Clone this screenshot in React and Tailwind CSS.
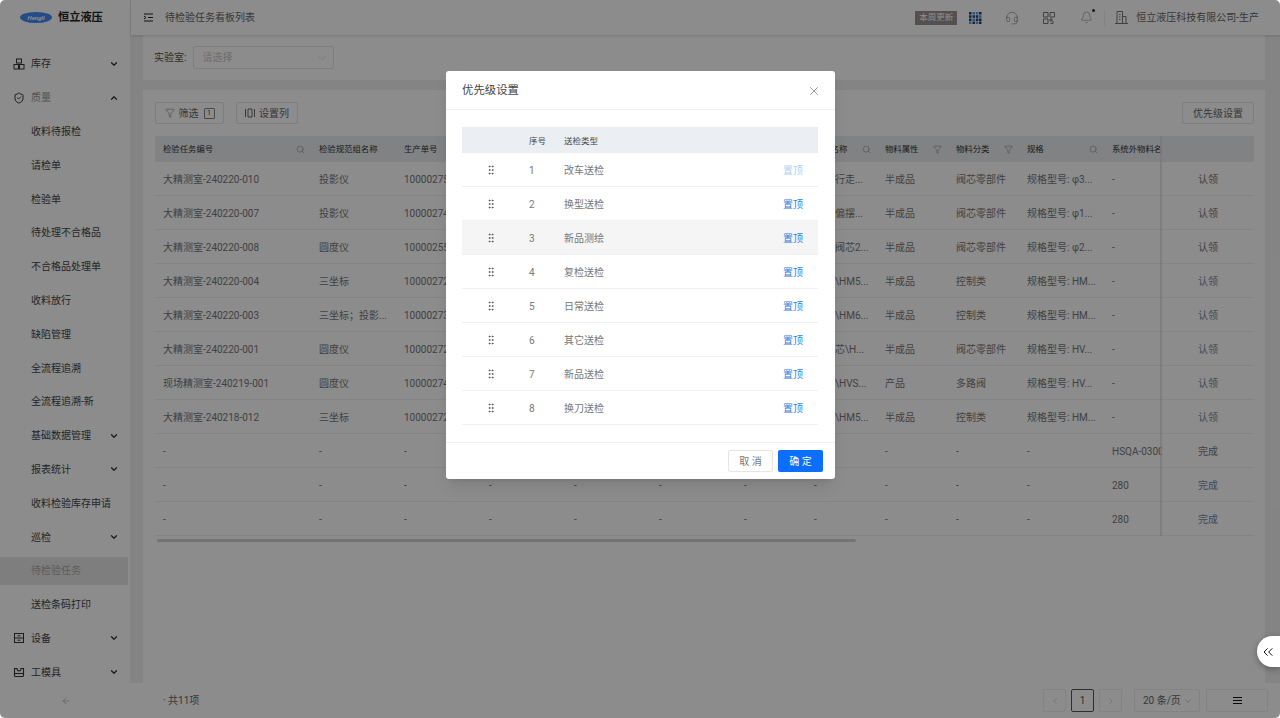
import React from "react";
import {
  Bell,
  ChevronDown,
  ChevronLeft,
  ChevronRight,
  ChevronUp,
  ChevronsLeft,
  Filter,
  GripVertical,
  Headset,
  Search,
  ShieldCheck,
  X,
  ArrowLeft,
} from "lucide-react";

const FONT = "font-['Roboto','Noto_Sans_CJK_SC',sans-serif]";
const COLS =
  "grid grid-cols-[156px_85px_85px_85px_85px_85px_70px_71px_71px_71px_85px_58px_92px]";

const BoxesIcon = () => (
  <svg width="12" height="12" viewBox="0 0 12 12" fill="none" stroke="currentColor" strokeWidth="1">
    <rect x="3.5" y="1" width="5" height="4" />
    <rect x="1" y="6.5" width="4.5" height="4.5" />
    <rect x="6.5" y="6.5" width="4.5" height="4.5" />
  </svg>
);

const DeviceIcon = () => (
  <svg width="12" height="12" viewBox="0 0 12 12" fill="none" stroke="currentColor" strokeWidth="1">
    <rect x="1.5" y="1.5" width="9" height="9" />
    <path d="M1.5 6h9M4.5 3.8h3M4.5 8.2h3" />
  </svg>
);

const ToolIcon = () => (
  <svg width="12" height="12" viewBox="0 0 12 12" fill="none" stroke="currentColor" strokeWidth="1.1">
    <path d="M1.5 2v7.5a1 1 0 0 0 1 1h7a1 1 0 0 0 1-1V2" />
    <path d="M1.5 2.5h2.5a2 2.5 0 0 0 4 0h2.5" />
    <path d="M1.5 7.5h9" />
  </svg>
);

const menu = [
  { label: "库存", icon: <BoxesIcon />, arrow: "down" },
  { label: "质量", icon: <ShieldCheck size={12} />, arrow: "up", muted: true },
  { label: "收料待报检" },
  { label: "请检单" },
  { label: "检验单" },
  { label: "待处理不合格品" },
  { label: "不合格品处理单" },
  { label: "收料放行" },
  { label: "缺陷管理" },
  { label: "全流程追溯" },
  { label: "全流程追溯-新" },
  { label: "基础数据管理", arrow: "down" },
  { label: "报表统计", arrow: "down" },
  { label: "收料检验库存申请" },
  { label: "巡检", arrow: "down" },
  { label: "待检验任务", active: true },
  { label: "送检条码打印" },
  { label: "设备", icon: <DeviceIcon />, arrow: "down" },
  { label: "工模具", icon: <ToolIcon />, arrow: "down" },
];

const rows = [
  ["大精测室-240220-010", "投影仪", "10000275", "行走...", "半成品", "阀芯零部件", "规格型号: φ3...", "-", "认领"],
  ["大精测室-240220-007", "投影仪", "10000274", "偏摆...", "半成品", "阀芯零部件", "规格型号: φ1...", "-", "认领"],
  ["大精测室-240220-008", "圆度仪", "10000255", "阀芯2...", "半成品", "阀芯零部件", "规格型号: φ2...", "-", "认领"],
  ["大精测室-240220-004", "三坐标", "10000272", "\\HM5...", "半成品", "控制类", "规格型号: HM...", "-", "认领"],
  ["大精测室-240220-003", "三坐标；投影...", "10000273", "\\HM6...", "半成品", "控制类", "规格型号: HM...", "-", "认领"],
  ["大精测室-240220-001", "圆度仪", "10000272", "芯\\H...", "半成品", "阀芯零部件", "规格型号: HV...", "-", "认领"],
  ["现场精测室-240219-001", "圆度仪", "10000274", "\\HVS...", "产品", "多路阀", "规格型号: HV...", "-", "认领"],
  ["大精测室-240218-012", "三坐标", "10000272", "\\HM5...", "半成品", "控制类", "规格型号: HM...", "-", "认领"],
];

const emptyRows = [
  ["HSQA-0300", "完成"],
  ["280", "完成"],
  ["280", "完成"],
];

const headers = [
  { label: "检验任务编号", icon: "search" },
  { label: "检验规范组名称" },
  { label: "生产单号" },
  {},
  {},
  {},
  {},
  { label: "物料名称", icon: "search" },
  { label: "物料属性", icon: "filter" },
  { label: "物料分类", icon: "filter" },
  { label: "规格", icon: "search" },
  { label: "系统外物料名" },
  {},
];

const priorities = ["改车送检", "换型送检", "新品测绘", "复检送检", "日常送检", "其它送检", "新品送检", "换刀送检"];

const Cell = ({ children, className = "" }) => (
  <div className={`flex items-center pl-2 overflow-hidden whitespace-nowrap ${className}`}>{children}</div>
);

const Sidebar = () => (
  <aside className="w-[131px] shrink-0 flex flex-col bg-white border-r border-[#eeeeee]">
    <div className="h-[47px] shrink-0 flex items-start pt-[12px] pl-[20px]">
      <div className="w-[32px] h-[11px] rounded-[50%] bg-[#3f8cf5] flex items-center justify-center text-[6px] font-bold italic text-white leading-none">
        Hengli
      </div>
      <span className="ml-[6px] -mt-[1px] text-[11.2px] leading-[14px] font-bold text-[#222222]">恒立液压</span>
    </div>
    <nav className="flex-1 overflow-hidden">
      {menu.map((item) => (
        <div
          key={item.label}
          className={`h-[33.8px] flex items-center text-[10px] ${item.active ? "bg-[#e6e6e6] bg-clip-content py-[3px] pr-[2px] text-[#a8a8a8]" : item.muted ? "text-[#999999]" : "text-[#444444]"}`}
        >
          <span className="w-[31px] shrink-0 flex justify-end pr-[6px] text-[#333333]">{item.icon}</span>
          <span className="flex-1">{item.label}</span>
          {item.arrow === "down" && <ChevronDown size={10} strokeWidth={3} className="mr-[11px] text-[#333333]" />}
          {item.arrow === "up" && <ChevronUp size={10} strokeWidth={3} className="mr-[11px] text-[#333333]" />}
        </div>
      ))}
    </nav>
  </aside>
);

const TopBar = () => (
  <header className="h-[35px] shrink-0 flex items-center bg-white shadow-[0_1px_3px_rgba(0,0,0,0.15)] relative text-[#666666]">
    <svg width="10" height="9" viewBox="0 0 10 9" className="ml-[13px]" fill="none" stroke="#222222" strokeWidth="1">
      <path d="M0 1h9M4 4.5h5M0 8h9M0 3l2 1.5L0 6" />
    </svg>
    <span className="ml-[11px] text-[10px]">待检验任务看板列表</span>
    <div className="ml-auto flex items-center">
      <span className="w-[42px] h-[14px] flex items-center justify-center bg-[#9c9191] text-white text-[8.5px]">本周更新</span>
      <svg width="13" height="12" viewBox="0 0 13 12" className="ml-[12px]">
        <path fill="#4a9bff" d="M3.5 0H6v2.5H3.5zM10 3.2h2.5v2.5H10zM3.5 6.4H6v2.5H3.5zM6.8 9.5h2.5V12H6.8zM0 9.5h2.5V12H0zM6.8 0h2.5v2.5H6.8z" />
        <path fill="#2c3f66" d="M0 0h2.5v2.5H0zM10 0h2.5v2.5H10zM0 3.2h2.5v2.5H0zM3.5 3.2H6v2.5H3.5zM6.8 3.2h2.5v2.5H6.8zM0 6.4h2.5v2.5H0zM6.8 6.4h2.5v2.5H6.8zM10 6.4h2.5v2.5H10zM3.5 9.5H6V12H3.5zM10 9.5h2.5V12H10z" />
      </svg>
      <Headset size={14} strokeWidth={1} className="ml-[23px] text-[#777777]" />
      <svg width="12" height="12" viewBox="0 0 12 12" className="ml-[24px]" fill="none" stroke="#777777" strokeWidth="1">
        <path d="M.5.5h4.5v4.5H.5zM7 .5h4.5v4.5H7zM.5 7h4.5v4.5H.5zM7 7h2v2H7zM10 9v2.5H7.5" />
      </svg>
      <span className="relative ml-[25px]">
        <Bell size={13} strokeWidth={1} className="text-[#777777]" />
        <span className="absolute -top-[2px] -right-[2px] w-[3px] h-[3px] rounded-full bg-[#333333]" />
      </span>
      <span className="ml-[11px] w-px h-[16px] bg-[#eeeeee]" />
      <svg width="13" height="13" viewBox="0 0 13 13" className="ml-[10px]" fill="none" stroke="#777777" strokeWidth="1">
        <path d="M0 12.5h13M2 12.5V.5h5.5v12M7.5 5.5h3.5v7M4 3.5h1.5M4 6h1.5M4 8.5h1.5" />
      </svg>
      <span className="ml-[8px] mr-[21px] text-[10px]">恒立液压科技有限公司-生产</span>
    </div>
  </header>
);

const HeaderIcon = ({ type }) =>
  type === "search" ? (
    <Search size={9} className="ml-auto mr-[6px] text-[#a0a0a0]" />
  ) : type === "filter" ? (
    <Filter size={9} className="ml-auto mr-[6px] text-[#a0a0a0]" />
  ) : null;

const TaskTable = () => (
  <div className="relative w-[1099px]">
    <div className={`${COLS} h-[26px] bg-[#e9edf1] text-[8.4px] text-[#333333]`}>
      {headers.map((h, i) => (
        <Cell key={i}>
          {h.label}
          <HeaderIcon type={h.icon} />
        </Cell>
      ))}
    </div>
    {rows.map((r, i) => (
      <div key={i} className={`${COLS} h-[34px] pt-[2px] border-b border-[#f0f0f0] text-[10px] text-[#777777]`}>
        <Cell>{r[0]}</Cell>
        <Cell>{r[1]}</Cell>
        <Cell>{r[2]}</Cell>
        <Cell />
        <Cell />
        <Cell />
        <Cell />
        <Cell className="pl-[29px]">{r[3]}</Cell>
        <Cell>{r[4]}</Cell>
        <Cell>{r[5]}</Cell>
        <Cell>{r[6]}</Cell>
        <Cell>{r[7]}</Cell>
        <div className={`flex items-center justify-center ${i > 2 ? "text-[#7488a3]" : ""}`}>{r[8]}</div>
      </div>
    ))}
    {emptyRows.map((r, i) => (
      <div key={i} className={`${COLS} h-[34px] pt-[1px] border-b border-[#f0f0f0] text-[10px] text-[#777777]`}>
        {Array.from({ length: 11 }).map((_, c) => (
          <Cell key={c}>-</Cell>
        ))}
        <Cell>{r[0]}</Cell>
        <div className={`flex items-center justify-center ${i > 0 ? "text-[#7488a3]" : ""}`}>{r[1]}</div>
      </div>
    ))}
    <div className="absolute top-0 h-[400px] left-[1005px] w-[3px] bg-linear-to-r from-[#dcdcdc] to-transparent" />
    <div className="mt-[3px] ml-[2px] w-[699px] h-[3px] rounded-full bg-[#d4d4d4]" />
  </div>
);

const Content = () => (
  <main className="flex-1 min-h-0 flex flex-col gap-[10px] pl-[12px] pr-[15px] bg-[#f1f1f1]">
    <div className="h-[45px] shrink-0 flex items-center pl-[11px] bg-white text-[10px] text-[#555555]">
      <span>实验室:</span>
      <div className="ml-[7px] w-[141px] h-[23px] flex items-center justify-between pl-[8px] pr-[5px] border border-[#e5e5e5] rounded-[2px] text-[#c8c8c8]">
        请选择
        <ChevronDown size={12} strokeWidth={1} />
      </div>
    </div>
    <div className="flex-1 min-h-0 bg-white pl-[12px] pr-[11px] pt-[12px]">
      <div className="flex items-center gap-[12px] h-[22px] text-[10px] text-[#666666]">
        <button className="w-[69px] h-[22px] flex items-center justify-center gap-[4px] border border-[#e5e5e5] rounded-[2px]">
          <Filter size={10} strokeWidth={1.2} />
          筛选
          <span className="ml-[1px] w-[11px] h-[11px] flex items-center justify-center border border-[#888888] rounded-[1px] text-[7px] text-[#444444]">1</span>
        </button>
        <button className="w-[62px] h-[22px] flex items-center justify-center gap-[4px] border border-[#e5e5e5] rounded-[2px]">
          <svg width="10" height="10" viewBox="0 0 10 10" fill="none" stroke="currentColor" strokeWidth="1">
            <path d="M.5 1v8M9.5 1v8M3 1h4v8H3z" />
          </svg>
          设置列
        </button>
        <button className="ml-auto w-[72px] h-[22px] flex items-center justify-center border border-[#e5e5e5] rounded-[2px]">优先级设置</button>
      </div>
      <div className="mt-[12px]">
        <TaskTable />
      </div>
    </div>
  </main>
);

const Footer = () => (
  <footer className="h-[35px] shrink-0 flex items-center bg-white text-[10px] text-[#666666]">
    <ArrowLeft size={10} className="ml-[61px] text-[#bbbbbb]" />
    <span className="ml-[92px]">· 共11项</span>
    <div className="ml-auto mr-[12px] flex items-center">
      <span className="w-[23px] h-[23px] flex items-center justify-center border border-[#eeeeee] rounded-[2px] text-[#cccccc]">
        <ChevronLeft size={10} />
      </span>
      <span className="ml-[5px] w-[23px] h-[23px] flex items-center justify-center border border-[#555555] rounded-[2px] text-[#555555]">1</span>
      <span className="ml-[5px] w-[23px] h-[23px] flex items-center justify-center border border-[#eeeeee] rounded-[2px] text-[#cccccc]">
        <ChevronRight size={10} />
      </span>
      <span className="ml-[12px] w-[66px] h-[23px] flex items-center justify-between pl-[8px] pr-[6px] border border-[#eeeeee] rounded-[2px]">
        20 条/页
        <ChevronDown size={10} className="text-[#bbbbbb]" />
      </span>
      <span className="ml-[6px] w-[62px] h-[23px] flex items-center justify-center border border-[#eeeeee] rounded-[2px]">
        <svg width="9" height="7" viewBox="0 0 9 7" stroke="#111111" strokeWidth="1">
          <path d="M0 .5h9M0 3.5h9M0 6.5h9" />
        </svg>
      </span>
    </div>
  </footer>
);

const PriorityModal = () => (
  <div className="absolute z-20 left-[446px] top-[71px] w-[389px] h-[408px] flex flex-col bg-white rounded-[3px] shadow-lg">
    <div className="h-[39px] shrink-0 flex items-center justify-between pl-[16px] pr-[14px] pt-[1px] border-b border-[#f0f0f0]">
      <span className="text-[11.4px] text-[#444444]">优先级设置</span>
      <X size={14} strokeWidth={1} className="text-[#555555]" />
    </div>
    <div className="flex-1 pt-[17px] pl-[16px] pr-[17px]">
      <div className="flex items-center h-[26px] pt-[2px] bg-[#ebeef3] text-[8.5px] text-[#444444]">
        <span className="w-[67px]" />
        <span className="w-[35px]">序号</span>
        <span>送检类型</span>
      </div>
      {priorities.map((name, i) => (
        <div
          key={name}
          className={`flex items-center h-[34px] pt-[1px] border-b border-[#f0f0f0] text-[10px] text-[#777777] ${i === 2 ? "bg-[#f5f5f5]" : ""}`}
        >
          <span className="w-[67px] pl-[23px]">
            <GripVertical size={12} strokeWidth={1.5} className="text-[#444444]" />
          </span>
          <span className="w-[35px]">{i + 1}</span>
          <span>{name}</span>
          <span className={`ml-auto mr-[15px] ${i === 0 ? "text-[#b4cdf0]" : "text-[#2f7de1]"}`}>置顶</span>
        </div>
      ))}
    </div>
    <div className="h-[37px] shrink-0 flex items-center justify-end gap-[5px] pr-[12px] border-t border-[#f0f0f0] text-[10px]">
      <button className="w-[45px] h-[22px] border border-[#e5e5e5] rounded-[2px] text-[#777777]">取 消</button>
      <button className="w-[45px] h-[22px] rounded-[2px] bg-[#0b6ffb] text-white">确 定</button>
    </div>
  </div>
);

const App = () => (
  <div className={`relative w-[1280px] h-[718px] rounded-[5px] overflow-hidden bg-white ${FONT}`}>
    <div className="flex flex-col h-full">
      <div className="flex-1 min-h-0 flex">
        <Sidebar />
        <div className="flex-1 min-w-0 flex flex-col">
          <TopBar />
          <Content />
        </div>
      </div>
      <Footer />
    </div>
    <div className="absolute inset-0 z-10 bg-black/45" />
    <PriorityModal />
    <div className="absolute z-30 right-0 top-[636px] w-[23px] h-[31px] flex items-center pl-[3px] rounded-l-full bg-white shadow-[0_2px_6px_rgba(0,0,0,0.3)]">
      <ChevronsLeft size={16} strokeWidth={1.5} className="text-[#111111]" />
    </div>
  </div>
);

export default App;
